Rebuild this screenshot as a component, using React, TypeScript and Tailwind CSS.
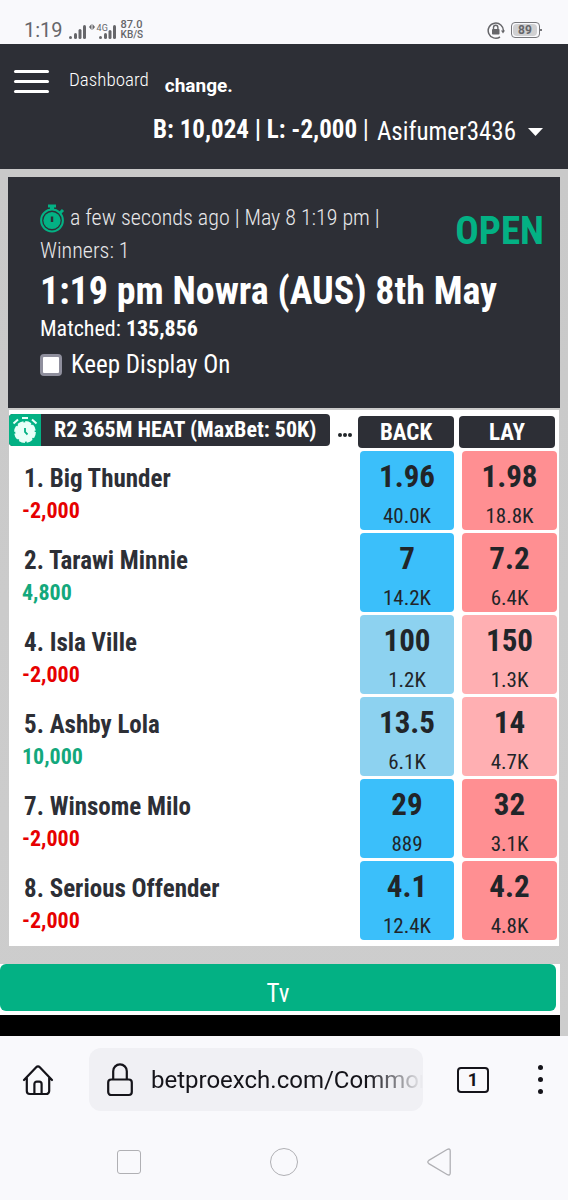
import type { ReactNode } from 'react';

type Runner = {
  name: string;
  profit: string;
  back: [string, string];
  lay: [string, string];
  faded?: boolean;
};

const runners: Runner[] = [
  { name: '1. Big Thunder', profit: '-2,000', back: ['1.96', '40.0K'], lay: ['1.98', '18.8K'] },
  { name: '2. Tarawi Minnie', profit: '4,800', back: ['7', '14.2K'], lay: ['7.2', '6.4K'] },
  { name: '4. Isla Ville', profit: '-2,000', back: ['100', '1.2K'], lay: ['150', '1.3K'], faded: true },
  { name: '5. Ashby Lola', profit: '10,000', back: ['13.5', '6.1K'], lay: ['14', '4.7K'], faded: true },
  { name: '7. Winsome Milo', profit: '-2,000', back: ['29', '889'], lay: ['32', '3.1K'] },
  { name: '8. Serious Offender', profit: '-2,000', back: ['4.1', '12.4K'], lay: ['4.2', '4.8K'] },
];

function StatusBar() {
  return (
    <div className="flex h-11 items-end bg-[#f9f9fc] pb-1 pl-6 pr-7 font-['Roboto',sans-serif] text-[#66666a]">
      <span className="text-xl leading-5">1:19</span>
      <svg className="ml-1.5" width="18" height="16" viewBox="0 0 18 16" fill="#66666a" aria-hidden="true">
        <rect x="0" y="12" width="3" height="3" rx="1.5" />
        <rect x="5" y="9" width="3" height="6" rx="1.5" />
        <rect x="9.5" y="5" width="3" height="10" rx="1.5" />
        <rect x="14" y="1" width="3" height="14" rx="1.5" />
      </svg>
      <span className="relative ml-0.5 flex w-7 items-end justify-end">
        <svg className="absolute left-0 top-0" width="6" height="6" viewBox="0 0 6 6" fill="#66666a" aria-hidden="true">
          <path d="M0 3L2.5 0v6zM6 3L3.5 0v6z" />
        </svg>
        <span className="absolute left-2 -top-1 text-[9px] leading-4">4G</span>
        <svg width="18" height="16" viewBox="0 0 18 16" fill="#66666a" aria-hidden="true">
          <rect x="0" y="12" width="3" height="3" rx="1.5" />
          <rect x="5" y="9" width="3" height="6" rx="1.5" />
          <rect x="9.5" y="6" width="3" height="9" rx="1.5" />
          <rect x="14" y="1" width="3" height="14" rx="1.5" />
        </svg>
      </span>
      <span className="ml-1 flex flex-col text-[10px] font-medium leading-[10px]">
        <span className="text-[11px]">87.0</span>
        <span>KB/S</span>
      </span>
      <svg className="ml-auto" width="18" height="22" viewBox="0 0 18 22" fill="none" stroke="#66666a" aria-hidden="true">
        <path d="M13 19A7.6 7.6 0 1 1 16.4 13" strokeWidth="1.5" />
        <path d="M14 12.5h4l-2 3z" fill="#66666a" stroke="none" />
        <rect x="5" y="11" width="7.5" height="5.5" rx="0.8" fill="#66666a" stroke="none" />
        <path d="M6.5 11V9.5a2.2 2.2 0 0 1 4.4 0V11" strokeWidth="1.4" />
      </svg>
      <span className="relative mb-0.5 ml-1.5 flex h-4 w-[29px] items-center rounded border border-[#77777b] p-px">
        <span className="flex h-full w-6 items-center justify-center rounded-sm bg-[#d0d0d2] text-xs font-bold">89</span>
        <span className="absolute -right-[3px] top-1.5 h-0.5 w-0.5 bg-[#77777b]" />
      </span>
    </div>
  );
}

function Header() {
  return (
    <header className="h-[125px] bg-[#2d2f36] px-3.5 pt-6 text-white">
      <div className="flex items-start">
        <button type="button" aria-label="Menu" className="flex w-[35px] flex-col gap-[7px] pt-0.5">
          <span className="h-[3px] w-full rounded bg-white" />
          <span className="h-[3px] w-full rounded bg-white" />
          <span className="h-[3px] w-full rounded bg-white" />
        </button>
        <a href="#dashboard" className="ml-5 text-[19px] font-light leading-6">Dashboard</a>
        <span className="ml-4 pt-1.5 font-['Roboto',sans-serif] text-[19px] font-bold leading-6">change.</span>
      </div>
      <div className="mt-3.5 flex items-center justify-end gap-2 pr-[11px]">
        <span className="text-[25px] font-bold leading-8">
          B: 10,024 | L: -2,000 <span className="font-normal">|</span>
        </span>
        <button type="button" className="flex items-center gap-3 pt-1 text-[25px] leading-8">
          Asifumer3436
          <svg width="15" height="8" viewBox="0 0 15 8" fill="currentColor" aria-hidden="true">
            <path d="M0 0h15L7.5 8z" />
          </svg>
        </button>
      </div>
    </header>
  );
}

function Stopwatch() {
  return (
    <svg className="inline-block align-[-8px]" width="25" height="29" viewBox="0 0 25 29" fill="none" stroke="#03b184" aria-hidden="true">
      <circle cx="12" cy="16.5" r="10.9" strokeWidth="2" />
      <circle cx="12" cy="16.5" r="8.6" fill="#03b184" stroke="none" />
      <path d="M8 2h8" strokeWidth="3" />
      <path d="M12 3v3" strokeWidth="4" />
      <path d="M20 9l3-3" strokeWidth="3" />
      <path d="M12 12.5v5.5" stroke="#2d2f36" strokeWidth="2.4" />
    </svg>
  );
}

function AlarmClock() {
  return (
    <svg width="26" height="28" viewBox="0 0 26 28" fill="none" stroke="#e9fff9" aria-hidden="true">
      <circle cx="13" cy="16" r="8.6" fill="#e9fff9" strokeWidth="2.4" />
      <circle cx="13" cy="16" r="10" strokeWidth="1.8" strokeDasharray="6 1.85" />
      <path d="M10 2h6M1.5 7.5L6 3.5M24.5 7.5L20 3.5" strokeWidth="2" />
      <path d="M13 12v4l2.5 2.5" stroke="#03b184" strokeWidth="1.8" />
    </svg>
  );
}

function EventCard() {
  return (
    <section className="mx-2 h-[231px] bg-[#2d2f36] pl-8 pr-4 pt-6 text-white">
      <div className="flex items-start justify-between">
        <p className="w-[350px] text-[22px] font-light leading-[33px] text-[#e8e8ea]">
          <Stopwatch /> a few seconds ago | May 8 1:19 pm | Winners: 1
        </p>
        <strong className="pt-1.5 text-[39px] font-bold leading-12 text-[#03b184]">OPEN</strong>
      </div>
      <h1 className="text-[38px] font-bold leading-12">1:19 pm Nowra (AUS) 8th May</h1>
      <p className="text-[22px] leading-7">
        Matched: <b>135,856</b>
      </p>
      <label className="mt-1 flex items-center gap-[9px] text-[25px] leading-9">
        <input type="checkbox" className="size-[22px] appearance-none rounded-sm border-[3px] border-[#8f8f9d] bg-white" />
        Keep Display On
      </label>
    </section>
  );
}

function Price({ value, className }: { value: [string, string]; className: string }) {
  return (
    <button type="button" className={`flex h-[79px] w-full flex-col items-center rounded pt-2 text-[#212529] ${className}`}>
      <span className="text-[31px] font-bold leading-9">{value[0]}</span>
      <span className="pt-[7px] text-[21px] leading-7">{value[1]}</span>
    </button>
  );
}

function HeadLabel({ children }: { children: ReactNode }) {
  return <span className="block h-8 rounded bg-[#2d2f36] text-[23px] font-bold leading-[34px] text-white">{children}</span>;
}

function Market() {
  return (
    <section className="mx-[9px] mt-0.5 bg-white pb-[3px] pt-1">
      <table className="w-full table-fixed border-collapse">
        <colgroup>
          <col />
          <col className="w-[101px]" />
          <col className="w-[101px]" />
        </colgroup>
        <thead>
          <tr>
            <th className="p-0 align-top font-normal">
              <div className="flex items-start">
                <span className="flex h-8 min-w-0 items-center overflow-hidden rounded bg-[#2d2f36] pr-3.5 text-[22px] font-bold text-white">
                  <span className="flex h-8 w-8 shrink-0 items-center justify-center bg-[#03b184]">
                    <AlarmClock />
                  </span>
                  <span className="whitespace-nowrap pl-[13px] leading-8">R2 365M HEAT (MaxBet: 50K)</span>
                </span>
                <svg className="ml-2 mt-[19px] shrink-0" width="14" height="4" viewBox="0 0 14 4" fill="#212529" role="img" aria-label="More">
                  <circle cx="2" cy="2" r="2" />
                  <circle cx="7" cy="2" r="2" />
                  <circle cx="12" cy="2" r="2" />
                </svg>
              </div>
            </th>
            <th className="pb-[3px] pl-px pr-1 pt-0.5"><HeadLabel>BACK</HeadLabel></th>
            <th className="pb-[3px] pl-px pr-1 pt-0.5"><HeadLabel>LAY</HeadLabel></th>
          </tr>
        </thead>
        <tbody>
          {runners.map((r) => (
            <tr key={r.name} className="h-[82px]">
              <td className="p-0 pl-[13px] pt-3 align-top font-bold">
                <div className="pl-0.5 text-[25px] leading-8 text-[#2d2f36]">{r.name}</div>
                <div className={`text-[22px] leading-8 ${r.profit.startsWith('-') ? 'text-[#e60000]' : 'text-[#13a87c]'}`}>{r.profit}</div>
              </td>
              <td className="p-0 pl-[3px] pr-1 align-top">
                <Price value={r.back} className={r.faded ? 'bg-[#8dd2f0]' : 'bg-[#3bbffa]'} />
              </td>
              <td className="p-0 pl-1 pr-0.5 align-top">
                <Price value={r.lay} className={r.faded ? 'bg-[#ffafb2]' : 'bg-[#ff8f92]'} />
              </td>
            </tr>
          ))}
        </tbody>
      </table>
    </section>
  );
}

function BrowserBar() {
  return (
    <footer className="bg-[#f9f9fc] pt-3 font-['Roboto',sans-serif] text-[#15141a]">
      <div className="flex h-[63px] items-center pl-[22px] pr-[21px]">
        <button type="button" aria-label="Home">
          <svg width="32" height="32" viewBox="0 0 32 32" fill="none" stroke="currentColor" strokeWidth="2.2" strokeLinecap="round" strokeLinejoin="round">
            <path d="M2 16L14.2 3.2a2.5 2.5 0 0 1 3.6 0L30 16M4.8 13.5V27a3 3 0 0 0 3 3h16.4a3 3 0 0 0 3-3V13.5" />
            <path d="M12.4 30V20a2.4 2.4 0 0 1 2.4-2.4h2.4a2.4 2.4 0 0 1 2.4 2.4v10" />
          </svg>
        </button>
        <div className="ml-[35px] flex h-full min-w-0 flex-1 items-center rounded-xl bg-[#f0f0f4] pl-[18px]">
          <svg className="shrink-0" width="26" height="34" viewBox="0 0 26 34" fill="none" stroke="currentColor" strokeWidth="2.2" aria-hidden="true">
            <rect x="1.2" y="16.5" width="23.6" height="15.5" rx="3" />
            <path d="M6.2 16.5V8.2a6.8 6.8 0 0 1 13.6 0v8.3" />
          </svg>
          <input
            type="text"
            aria-label="Address"
            readOnly
            defaultValue="betproexch.com/Common"
            className="ml-[18px] min-w-0 flex-1 bg-transparent text-2xl outline-none [mask-image:linear-gradient(to_right,black_80%,transparent)]"
          />
        </div>
        <button type="button" aria-label="Tabs" className="ml-[34px] flex h-[26px] w-8 items-center justify-center rounded border-2 border-[#15141a] text-lg font-bold leading-5">
          1
        </button>
        <button type="button" aria-label="Browser menu" className="ml-11 flex w-3.5 flex-col items-center gap-[7px]">
          <span className="size-[5px] rounded-sm bg-[#15141a]" />
          <span className="size-[5px] rounded-sm bg-[#15141a]" />
          <span className="size-[5px] rounded-sm bg-[#15141a]" />
        </button>
      </div>
      <nav aria-label="System" className="flex h-[101px] items-center justify-between px-[117px] text-[#b0b0b4]">
        <button type="button" aria-label="Recent apps" className="size-6 rounded-[3px] border border-current" />
        <button type="button" aria-label="Home screen" className="size-7 rounded-full border border-current" />
        <button type="button" aria-label="Back">
          <svg width="24" height="28" viewBox="0 0 24 28" fill="none" stroke="currentColor" strokeWidth="1.3" strokeLinejoin="round">
            <path d="M1.8 12.4L20.5 1.3q2.5-1 2.7 1.5v22.4q-.2 2.5-2.7 1.5L1.8 15.6q-2-1.6 0-3.2z" />
          </svg>
        </button>
      </nav>
    </footer>
  );
}

export default function App() {
  return (
    <div className="flex min-h-screen flex-col font-['Roboto_Condensed','Liberation_Sans_Narrow',Roboto,sans-serif]">
      <StatusBar />
      <Header />
      <main className="flex-1 bg-linear-to-b from-[#c9c9c9] to-[#cdcdcd] pt-2">
        <EventCard />
        <Market />
        <section className="mr-2 mt-[18px] bg-white pb-1 pr-1">
          <button type="button" className="block h-[47px] w-full rounded-md bg-[#03b184] pt-3 text-[25px] leading-9 text-white">
            Tv
          </button>
        </section>
        <div className="mr-2 h-[21px] bg-black" />
      </main>
      <BrowserBar />
    </div>
  );
}
